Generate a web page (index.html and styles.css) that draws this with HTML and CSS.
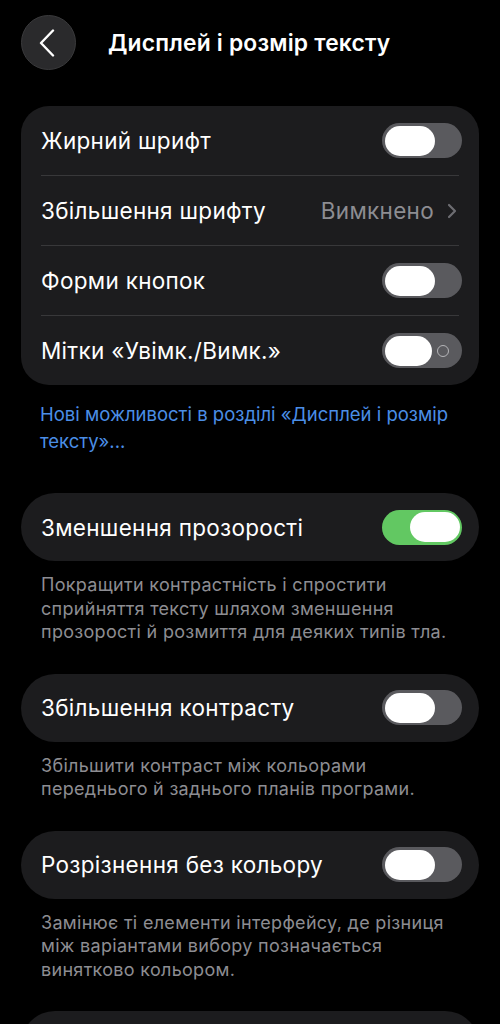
FILE: index.html
```html
<!DOCTYPE html>
<html lang="uk">
<head>
<meta charset="utf-8">
<link rel="stylesheet" href="styles.css">
</head>
<body>
<header class="topbar">
  <button class="back" aria-label="Назад">
    <svg width="16" height="28" viewBox="0 0 16 28"><path d="M14 1.5 L2 14 L14 26.5" fill="none" stroke="#fff" stroke-width="2.4" stroke-linecap="round" stroke-linejoin="round"/></svg>
  </button>
  <h1 class="title">Дисплей і розмір тексту</h1>
</header>

<main class="content">
  <section class="card">
    <div class="row">
      <span class="label">Жирний шрифт</span>
      <span class="toggle"><span class="thumb"></span></span>
    </div>
    <div class="row">
      <span class="label">Збільшення шрифту</span>
      <span class="value">Вимкнено
        <svg class="chev" width="10" height="16" viewBox="0 0 10 16"><path d="M2 2 L8 8 L2 14" fill="none" stroke="#6d6d72" stroke-width="2.2" stroke-linecap="round" stroke-linejoin="round"/></svg>
      </span>
    </div>
    <div class="row">
      <span class="label">Форми кнопок</span>
      <span class="toggle"><span class="thumb"></span></span>
    </div>
    <div class="row">
      <span class="label">Мітки «Увімк./Вимк.»</span>
      <span class="toggle labels"><span class="thumb"></span><span class="ring"></span></span>
    </div>
  </section>
  <p class="link">Нові можливості в розділі «Дисплей і розмір тексту»...</p>

  <section class="card pill">
    <div class="row">
      <span class="label">Зменшення прозорості</span>
      <span class="toggle on"><span class="thumb"></span></span>
    </div>
  </section>
  <p class="desc">Покращити контрастність і спростити сприйняття тексту шляхом зменшення прозорості й розмиття для деяких типів тла.</p>

  <section class="card pill">
    <div class="row">
      <span class="label">Збільшення контрасту</span>
      <span class="toggle"><span class="thumb"></span></span>
    </div>
  </section>
  <p class="desc">Збільшити контраст між кольорами переднього й заднього планів програми.</p>

  <section class="card pill">
    <div class="row">
      <span class="label">Розрізнення без кольору</span>
      <span class="toggle"><span class="thumb"></span></span>
    </div>
  </section>
  <p class="desc">Замінює ті елементи інтерфейсу, де різниця між варіантами вибору позначається винятково кольором.</p>

  <section class="card pill">
    <div class="row">
      <span class="label">&nbsp;</span>
    </div>
  </section>
</main>
</body>
</html>
```

FILE: styles.css
```css
html, body {
  margin: 0;
  padding: 0;
  background: #000;
}
body {
  width: 500px;
  height: 1024px;
  overflow: hidden;
  font-family: Inter, "Noto Sans", "Liberation Sans", sans-serif;
  color: #fff;
  -webkit-font-smoothing: antialiased;
}
.topbar {
  display: flex;
  align-items: center;
  padding: 15px 0 0 21px;
  height: 55px;
}
.back {
  width: 55px;
  height: 55px;
  border-radius: 50%;
  border: 1px solid #3a3a3c;
  background: #2a2a2c;
  display: flex;
  align-items: center;
  justify-content: center;
  padding: 0 3px 0 0;
  box-sizing: border-box;
}
.title {
  margin: 0 0 0 32px;
  font-size: 22.8px;
  font-weight: 600;
  letter-spacing: 0.2px;
}
.content {
  padding: 36px 21px 0;
}
.card {
  background: #1c1c1e;
  border-radius: 28px;
  overflow: hidden;
}
.card.pill {
  border-radius: 34px;
}
.row {
  height: 69px;
  display: flex;
  align-items: center;
  justify-content: space-between;
  padding: 0 17px 0 20px;
}
.card:not(.pill) .row + .row {
  border-top: 1px solid #38383a;
  margin: 0 20px;
  padding: 0;
}
.card:not(.pill) .row + .row .toggle {
  margin-right: -3px;
}
.pill .row {
  height: 68px;
}
.label {
  font-size: 22.5px;
  font-weight: 400;
  letter-spacing: 0.3px;
}
.value {
  display: flex;
  align-items: center;
  gap: 13px;
  font-size: 22.5px;
  letter-spacing: 0.3px;
  color: #8d8d92;
}
.chev {
  margin-right: 2px;
}
.toggle {
  width: 80px;
  height: 35px;
  border-radius: 18px;
  background: #5a5a5e;
  display: flex;
  align-items: center;
  padding: 0 2.5px;
  box-sizing: border-box;
}
.toggle .thumb {
  width: 50px;
  height: 30px;
  border-radius: 15px;
  background: #fff;
}
.toggle.on {
  background: #62c862;
  justify-content: flex-end;
}
.toggle.labels {
  justify-content: space-between;
  padding-right: 13px;
}
.toggle.labels .thumb {
  width: 47px;
}
.ring {
  width: 10px;
  height: 10px;
  border: 1.8px solid #b5b5b8;
  border-radius: 50%;
}
.link {
  margin: 16px 0 38px 19px;
  font-size: 18.5px;
  line-height: 27px;
  color: #4b8ee6;
}
.desc {
  margin: 12px 0 30px 20px;
  padding-right: 4px;
  font-size: 18px;
  line-height: 23.5px;
  color: #8d8d92;
  letter-spacing: 0.3px;
}
```
